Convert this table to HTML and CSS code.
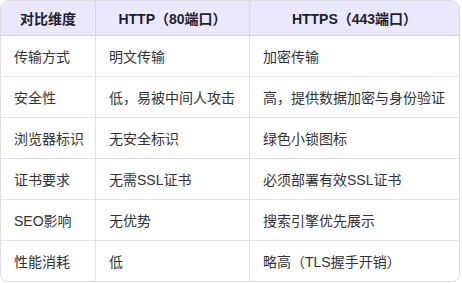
FILE: index.html
```html
<!DOCTYPE html>
<html lang="zh">
<head>
<meta charset="utf-8">
<link rel="stylesheet" href="styles.css">
</head>
<body>
<table class="cmp">
  <colgroup>
    <col class="c1"><col class="c2"><col class="c3">
  </colgroup>
  <thead>
    <tr><th>对比维度</th><th>HTTP（80端口）</th><th>HTTPS（443端口）</th></tr>
  </thead>
  <tbody>
    <tr><td>传输方式</td><td>明文传输</td><td>加密传输</td></tr>
    <tr><td>安全性</td><td>低，易被中间人攻击</td><td>高，提供数据加密与身份验证</td></tr>
    <tr><td>浏览器标识</td><td>无安全标识</td><td>绿色小锁图标</td></tr>
    <tr><td>证书要求</td><td>无需SSL证书</td><td>必须部署有效SSL证书</td></tr>
    <tr><td>SEO影响</td><td>无优势</td><td>搜索引擎优先展示</td></tr>
    <tr><td>性能消耗</td><td>低</td><td>略高（TLS握手开销）</td></tr>
  </tbody>
</table>
</body>
</html>
```
FILE: styles.css
```css
html, body {
  margin: 0;
  padding: 0;
  background: #ffffff;
}
.cmp {
  width: 460px;
  border-collapse: separate;
  border-spacing: 0;
  border: 1px solid #dcdce4;
  border-radius: 8px;
  overflow: hidden;
  font-family: "Liberation Sans", "Noto Sans CJK SC", sans-serif;
  font-size: 14px;
  color: #333333;
  table-layout: fixed;
}
.c1 { width: 95px; }
.c2 { width: 154px; }
.c3 { width: auto; }
.cmp th {
  height: 35px;
  padding: 0 8px;
  box-sizing: border-box;
  background: #e9e8fc;
  color: #1f1f2e;
  font-weight: bold;
  text-align: center;
  border-bottom: 1px solid #d2d0ee;
  border-right: 1px solid #d8d6ee;
}
.cmp td {
  height: 41px;
  padding: 0 14px 0 13px;
  box-sizing: border-box;
  text-align: left;
  border-bottom: 1px solid #e2e2e6;
  border-right: 1px solid #e2e2e6;
  white-space: nowrap;
}
.cmp th:last-child, .cmp td:last-child { border-right: none; }
.cmp tbody tr:last-child td { border-bottom: none; height: 40px; }
```
